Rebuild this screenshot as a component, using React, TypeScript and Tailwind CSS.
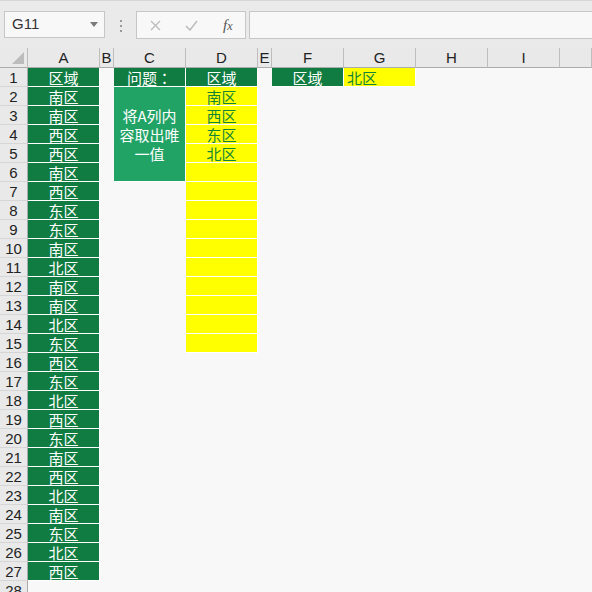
import React from 'react';

const colA = [
  '南区', '南区', '西区', '西区', '南区', '西区', '东区', '东区', '南区', '北区',
  '南区', '南区', '北区', '东区', '西区', '东区', '北区', '西区', '东区', '南区',
  '西区', '北区', '南区', '东区', '北区', '西区',
];

const colD = ['南区', '西区', '东区', '北区'];

const letters = ['A', 'B', 'C', 'D', 'E', 'F', 'G', 'H', 'I', ''];

const cjk = "font-['Noto_Sans_CJK_SC',sans-serif]";

function RowHead({ n }: { n: number }) {
  return (
    <div className="flex items-center justify-center border-r border-b border-r-[#ababab] border-b-[#d6d6d6] bg-[#e9e9e9] font-['Liberation_Sans',sans-serif] text-[15px] leading-none text-[#222]">
      {n}
    </div>
  );
}

function Empty() {
  return <div />;
}

function Green({ text, tc }: { text: string; tc?: boolean }) {
  return (
    <div
      className={`flex items-center justify-center border-r border-b border-white bg-[#107c41] text-[15px] leading-none text-white ${
        tc ? "font-['Noto_Sans_CJK_TC',sans-serif]" : cjk
      }`}
    >
      {text}
    </div>
  );
}

function Yellow({ text, left }: { text?: string; left?: boolean }) {
  return (
    <div
      className={`flex items-center border-r border-b border-white bg-[#ffff00] text-[15px] leading-none text-[#12843a] ${cjk} ${
        left ? 'justify-start pl-[3px]' : 'justify-center'
      }`}
    >
      {text}
    </div>
  );
}

export default function App() {
  const rows: React.ReactNode[] = [];

  // Row 1
  rows.push(
    <React.Fragment key="r1">
      <RowHead n={1} />
      <Green text="区域" />
      <Empty />
      <Green text="问题：" tc />
      <Green text="区域" />
      <Empty />
      <Green text="区域" />
      <Yellow text="北区" left />
      <Empty />
      <Empty />
      <Empty />
    </React.Fragment>
  );

  for (let r = 2; r <= 28; r++) {
    const a = colA[r - 2];
    rows.push(
      <React.Fragment key={`r${r}`}>
        <RowHead n={r} />
        {a ? <Green text={a} /> : <Empty />}
        <Empty />
        {r === 2 && (
          <div
            className={`row-span-5 flex flex-col items-center justify-center border-r border-b border-white bg-[#21a366] text-[15px] leading-[19px] text-white ${cjk}`}
          >
            <span>将A列内</span>
            <span>容取出唯</span>
            <span>一值</span>
          </div>
        )}
        {r > 6 && <Empty />}
        {r <= 15 ? <Yellow text={colD[r - 2]} /> : <Empty />}
        <Empty />
        <Empty />
        <Empty />
        <Empty />
        <Empty />
        <Empty />
      </React.Fragment>
    );
  }

  return (
    <div className="h-[592px] w-[592px] overflow-hidden bg-[#f8f8f8]">
      {/* Toolbar */}
      <div className="flex h-[48px] items-start border-t border-[#d6d6d6] bg-[#eaeaea] pt-[10px]">
        <div className="ml-[4px] flex h-[27px] w-[101px] items-center justify-between border border-[#c6c6c6] bg-[#f8f8f8] pl-[7px] pr-[6px]">
          <span className="font-['Liberation_Sans',sans-serif] text-[15px] text-[#333]">G11</span>
          <svg width="8" height="5" viewBox="0 0 8 5">
            <path d="M0 0 H8 L4 5 Z" fill="#7a7a7a" />
          </svg>
        </div>
        <div className="ml-[15px] mt-[9px] flex flex-col gap-[3px]">
          <span className="h-[2px] w-[2px] bg-[#9a9a9a]" />
          <span className="h-[2px] w-[2px] bg-[#9a9a9a]" />
          <span className="h-[2px] w-[2px] bg-[#9a9a9a]" />
        </div>
        <div className="ml-[14px] flex h-[28px] w-[110px] items-center border border-[#c6c6c6] bg-[#f8f8f8]">
          <svg className="ml-[13px]" width="11" height="11" viewBox="0 0 11 11">
            <path d="M1 1 L10 10 M10 1 L1 10" stroke="#bdbdbd" strokeWidth="1.4" />
          </svg>
          <svg className="ml-[24px]" width="13" height="11" viewBox="0 0 13 11">
            <path d="M1 6 L5 10 L12 1" stroke="#bdbdbd" strokeWidth="1.6" fill="none" />
          </svg>
          <span className="ml-[25px] font-['Liberation_Serif',serif] text-[15px] italic leading-none text-[#555]">
            f<span className="text-[12px]">x</span>
          </span>
        </div>
        <div className="ml-[3px] h-[28px] flex-1 border border-r-0 border-[#c6c6c6] bg-[#f8f8f8]" />
      </div>

      {/* Sheet */}
      <div className="grid grid-cols-[28px_72px_14px_72px_72px_14px_72px_72px_72px_72px_1fr] grid-rows-[20px] auto-rows-[19px]">
        <div className="relative border-r border-b border-r-[#bdbdbd] border-b-[#ababab] bg-[#e9e9e9]">
          <svg className="absolute right-[3px] bottom-[3px]" width="12" height="12" viewBox="0 0 12 12">
            <path d="M12 0 V12 H0 Z" fill="#bcbcbc" />
          </svg>
        </div>
        {letters.map((l, i) => (
          <div
            key={i}
            className="flex items-center justify-center border-r border-b border-r-[#bdbdbd] border-b-[#ababab] bg-[#e9e9e9] font-['Liberation_Sans',sans-serif] text-[15px] leading-none text-[#222]"
          >
            {l}
          </div>
        ))}
        {rows}
      </div>
    </div>
  );
}
